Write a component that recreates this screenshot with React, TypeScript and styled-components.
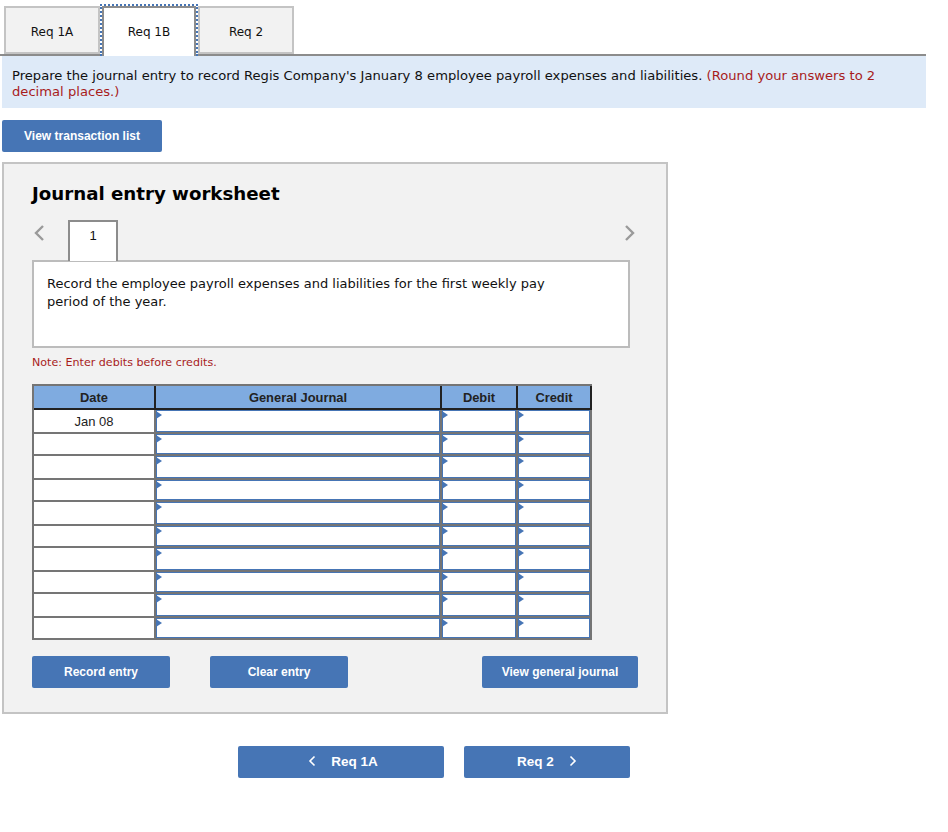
import styled, { createGlobalStyle } from "styled-components";

const GlobalStyle = createGlobalStyle`
  html, body {
    margin: 0;
    padding: 0;
    background: #fff;
    font-family: "DejaVu Sans", Verdana, sans-serif;
    color: #111;
  }
`;

const Page = styled.div`
  width: 926px;
  padding-top: 6px;
  padding-bottom: 54px;
`;

const TabBar = styled.div`
  display: flex;
  height: 48px;
  padding-left: 4px;
  border-bottom: 2px solid #8c8c8c;
`;

const Tab = styled.div<{ $active?: boolean }>`
  box-sizing: border-box;
  width: ${(p) => (p.$active ? "94px" : "96px")};
  height: ${(p) => (p.$active ? "50px" : "48px")};
  display: flex;
  align-items: center;
  justify-content: center;
  padding-top: ${(p) => (p.$active ? "0" : "4px")};
  font-size: 12px;
  background: ${(p) => (p.$active ? "#fff" : "#f2f2f2")};
  border: 2px solid ${(p) => (p.$active ? "#8c8c8c" : "#c4c4c4")};
  border-bottom-width: ${(p) => (p.$active ? "0" : "2px")};
`;

const FocusFrame = styled.div`
  height: 50px;
  margin-top: -2px;
  border: 2px dotted #4675b5;
  border-bottom: none;
  position: relative;
  z-index: 1;
`;

const Instructions = styled.div`
  margin-left: 2px;
  padding: 12px 10px 7px;
  height: 33px;
  background: #deeaf8;
  font-size: 13.13px;
  line-height: 16px;
`;

const Red = styled.span`
  color: #a81c1c;
`;

const Button = styled.button<{ $width: number; $size?: number; $gap?: number }>`
  box-sizing: border-box;
  width: ${(p) => p.$width}px;
  height: 32px;
  border: none;
  border-radius: 2px;
  background: #4675b5;
  color: #fff;
  font-family: "Liberation Sans", Arial, sans-serif;
  font-weight: bold;
  font-size: ${(p) => p.$size ?? 12}px;
  display: flex;
  align-items: center;
  justify-content: center;
  gap: ${(p) => p.$gap ?? 0}px;
  padding: 0;
`;

const NavButton = styled(Button)<{ $shift?: number }>`
  padding: 0 0 2px ${(p) => p.$shift ?? 0}px;
`;

const TopAction = styled.div`
  margin: 12px 0 10px 2px;
`;

const Worksheet = styled.section`
  box-sizing: border-box;
  width: 666px;
  height: 552px;
  margin-left: 2px;
  padding: 18px 28px 0;
  background: #f2f2f2;
  border: 2px solid #c4c4c4;
`;

const Title = styled.h2`
  margin: 0;
  font-size: 18.2px;
  line-height: 24px;
  font-weight: bold;
  color: #000;
`;

const Pager = styled.div`
  display: flex;
  align-items: flex-start;
  justify-content: space-between;
  width: 608px;
  height: 40px;
  margin-top: 14px;
`;

const PagerLeft = styled.div`
  display: flex;
  align-items: flex-start;
  gap: 19px;
  margin-left: -3px;
`;

const Chevron = styled.svg`
  display: block;
  margin-top: 3px;
  fill: none;
  stroke: #9a9a9a;
  stroke-width: 2.4;
`;

const PageTab = styled.div`
  box-sizing: border-box;
  width: 50px;
  height: 41px;
  padding-top: 6px;
  text-align: center;
  background: #fff;
  border: 2px solid #8c8c8c;
  border-bottom: none;
  font-family: "Liberation Sans", Arial, sans-serif;
  font-size: 13px;
  line-height: 15px;
  position: relative;
`;

const Prompt = styled.div`
  box-sizing: border-box;
  width: 598px;
  height: 88px;
  padding: 13px 13px 0;
  background: #fff;
  border: 2px solid #bcbcbc;
  font-size: 13px;
  line-height: 18px;
`;

const PromptText = styled.p`
  margin: 0;
  max-width: 510px;
`;

const Note = styled.p`
  margin: 8px 0 14px;
  color: #a81c1c;
  font-size: 11.1px;
  line-height: 14px;
`;

const Table = styled.table`
  box-sizing: border-box;
  width: 560px;
  table-layout: fixed;
  border-collapse: separate;
  border-spacing: 0;
  border-top: 2px solid #757575;
  border-left: 2px solid #757575;
`;

const HeadCell = styled.th`
  box-sizing: border-box;
  height: 24px;
  padding: 1px 0 0;
  background: #7fabe0;
  border-right: 2px solid #222;
  border-bottom: 2px solid #222;
  color: #222;
  font-family: "Liberation Sans", Arial, sans-serif;
  font-size: 12.9px;
  font-weight: bold;
`;

const DateCell = styled.td`
  box-sizing: border-box;
  height: 22px;
  padding: 1px 0 0;
  background: #fff;
  border-right: 2px solid #757575;
  border-bottom: 2px solid #757575;
  text-align: center;
  color: #222;
  font-family: "Liberation Sans", Arial, sans-serif;
  font-size: 13px;
  tr:nth-child(odd) & {
    height: 24px;
  }
`;

const EntryCell = styled.td`
  box-sizing: border-box;
  height: 22px;
  padding: 0;
  border-right: 2px solid #757575;
  border-bottom: 2px solid #757575;
  position: relative;
  tr:nth-child(odd) & {
    height: 24px;
  }
  &::before {
    content: "";
    position: absolute;
    top: 1px;
    left: 0;
    border-left: 6px solid #4675b5;
    border-top: 4px solid transparent;
    border-bottom: 4px solid transparent;
  }
`;

const Entry = styled.input`
  display: block;
  box-sizing: border-box;
  width: 100%;
  height: 20px;
  padding: 0;
  margin: 0;
  background: #fff;
  border: 1px solid #4675b5;
  border-radius: 0;
  outline: none;
  tr:nth-child(odd) & {
    height: 22px;
  }
`;

const ActionRow = styled.div`
  display: flex;
  width: 606px;
  justify-content: space-between;
  margin-top: 16px;
`;

const LeftActions = styled.div`
  display: flex;
  gap: 40px;
`;

const BottomNav = styled.nav`
  display: flex;
  gap: 20px;
  margin: 32px 0 0 238px;
`;

const NavChevron = styled.svg`
  display: block;
  fill: none;
  stroke: #fff;
  stroke-width: 1.6;
`;

const columns = [122, 286, 76, 74];
const rows = ["Jan 08", "", "", "", "", "", "", "", "", ""];

const LeftIcon = () => (
  <NavChevron width="8" height="12" viewBox="0 0 8 12">
    <path d="M6.5 1.5 2 6l4.5 4.5" />
  </NavChevron>
);

const RightIcon = () => (
  <NavChevron width="8" height="12" viewBox="0 0 8 12">
    <path d="M1.5 1.5 6 6l-4.5 4.5" />
  </NavChevron>
);

export default function App() {
  return (
    <>
      <GlobalStyle />
      <Page>
        <TabBar>
          <Tab>Req 1A</Tab>
          <FocusFrame>
            <Tab $active>Req 1B</Tab>
          </FocusFrame>
          <Tab>Req 2</Tab>
        </TabBar>
        <Instructions>
          Prepare the journal entry to record Regis Company's January 8 employee payroll expenses and
          liabilities. <Red>(Round your answers to 2 decimal places.)</Red>
        </Instructions>
        <TopAction>
          <Button $width={160}>View transaction list</Button>
        </TopAction>
        <Worksheet>
          <Title>Journal entry worksheet</Title>
          <Pager>
            <PagerLeft>
              <Chevron width="20" height="20" viewBox="0 0 20 20">
                <path d="M14 3 7 10l7 7" />
              </Chevron>
              <PageTab>1</PageTab>
            </PagerLeft>
            <Chevron width="20" height="20" viewBox="0 0 20 20">
              <path d="M6 3l7 7-7 7" />
            </Chevron>
          </Pager>
          <Prompt>
            <PromptText>
              Record the employee payroll expenses and liabilities for the first weekly pay period of
              the year.
            </PromptText>
          </Prompt>
          <Note>Note: Enter debits before credits.</Note>
          <Table>
            <colgroup>
              {columns.map((w) => (
                <col key={w} width={w} />
              ))}
            </colgroup>
            <thead>
              <tr>
                <HeadCell>Date</HeadCell>
                <HeadCell>General Journal</HeadCell>
                <HeadCell>Debit</HeadCell>
                <HeadCell>Credit</HeadCell>
              </tr>
            </thead>
            <tbody>
              {rows.map((date, i) => (
                <tr key={i}>
                  <DateCell>{date}</DateCell>
                  <EntryCell>
                    <Entry readOnly />
                  </EntryCell>
                  <EntryCell>
                    <Entry readOnly />
                  </EntryCell>
                  <EntryCell>
                    <Entry readOnly />
                  </EntryCell>
                </tr>
              ))}
            </tbody>
          </Table>
          <ActionRow>
            <LeftActions>
              <Button $width={138}>Record entry</Button>
              <Button $width={138}>Clear entry</Button>
            </LeftActions>
            <Button $width={156}>View general journal</Button>
          </ActionRow>
        </Worksheet>
        <BottomNav>
          <NavButton $width={206} $size={13.5} $gap={15} $shift={4}>
            <LeftIcon />
            Req 1A
          </NavButton>
          <NavButton $width={166} $size={13.5} $gap={15}>
            Req 2
            <RightIcon />
          </NavButton>
        </BottomNav>
      </Page>
    </>
  );
}
